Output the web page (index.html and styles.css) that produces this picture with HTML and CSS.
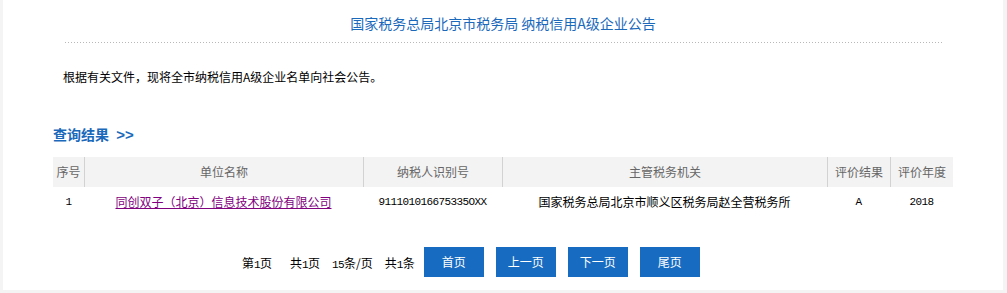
FILE: index.html
```html
<!DOCTYPE html>
<html lang="zh-CN">
<head>
<meta charset="utf-8">
<title>纳税信用A级企业公告</title>
<link rel="stylesheet" href="styles.css">
</head>
<body>
<div class="page">
  <h1 class="title">国家税务总局北京市税务局 纳税信用A级企业公告</h1>
  <div class="divider"></div>
  <p class="notice">根据有关文件，现将全市纳税信用A级企业名单向社会公告。</p>
  <h2 class="section-title">查询结果 <span class="arrows">&gt;&gt;</span></h2>
  <div class="table">
    <div class="th">序号</div>
    <div class="th">单位名称</div>
    <div class="th">纳税人识别号</div>
    <div class="th">主管税务机关</div>
    <div class="th">评价结果</div>
    <div class="th">评价年度</div>
    <div class="td num">1</div>
    <div class="td"><a class="company" href="#">同创双子（北京）信息技术股份有限公司</a></div>
    <div class="td num">911101016675335OXX</div>
    <div class="td">国家税务总局北京市顺义区税务局赵全营税务所</div>
    <div class="td num">A</div>
    <div class="td num">2018</div>
  </div>
  <div class="pager">
    <span class="info first">第<b>1</b>页</span>
    <span class="info">共<b>1</b>页</span>
    <span class="info"><b>15</b>条/页</span>
    <span class="info last">共<b>1</b>条</span>
    <a class="btn" href="#">首页</a>
    <a class="btn" href="#">上一页</a>
    <a class="btn" href="#">下一页</a>
    <a class="btn" href="#">尾页</a>
  </div>
</div>
</body>
</html>
```
FILE: styles.css
```css
html, body {
  margin: 0;
  padding: 0;
  background: #f4f4f4;
}
body {
  font-family: "Noto Sans CJK SC", "Liberation Sans", sans-serif;
  font-size: 12px;
  color: #000;
}
.page {
  margin-left: 3px;
  width: 1000px;
  height: 290px;
  background: #fff;
  overflow: hidden;
}
.title {
  margin: 0;
  padding-top: 13px;
  font-size: 14px;
  font-weight: normal;
  line-height: 20px;
  color: #1a69bb;
  text-align: center;
}
.divider {
  margin: 9px 0 0 62px;
  width: 877px;
  height: 1px;
  background: repeating-linear-gradient(to right, #b8b8b8 0 1px, transparent 1px 3px);
}
.notice {
  margin: 25px 0 0 60px;
  line-height: 18px;
  font-size: 12px;
}
.section-title {
  margin: 38px 0 0 50px;
  font-size: 14px;
  line-height: 20px;
  font-weight: bold;
  color: #1a69bb;
}
.arrows {
  font-family: "Liberation Sans", sans-serif;
  font-size: 15px;
  margin-left: 4px;
  letter-spacing: 0;
}
.table {
  margin: 12px 0 0 50px;
  width: 900px;
  display: grid;
  grid-template-columns: 31px 279px 139px 325px 63px 63px;
}
.th {
  height: 30px;
  line-height: 30px;
  background: #f3f3f3;
  color: #666;
  text-align: center;
  box-sizing: border-box;
  border-left: 1px solid #d2d2d2;
  white-space: nowrap;
}
.th:first-child {
  border-left: none;
}
.td {
  height: 30px;
  line-height: 30px;
  text-align: center;
  white-space: nowrap;
}
.num {
  font-family: "Liberation Mono", monospace;
  font-size: 11px;
  letter-spacing: -0.6px;
}
.company {
  color: #800080;
  text-decoration: underline;
}
.pager {
  margin: 30px 0 0 239px;
  display: flex;
  align-items: center;
  height: 30px;
}
.info {
  margin-right: 12px;
  white-space: nowrap;
}
.info.first {
  margin-right: 18px;
}
.info.last {
  margin-right: 9px;
}
.info b {
  font-weight: normal;
  font-family: "Liberation Mono", monospace;
  font-size: 11px;
  letter-spacing: -0.6px;
}
.btn {
  display: block;
  width: 60px;
  height: 30px;
  line-height: 30px;
  margin-right: 12px;
  background: #176bc1;
  color: #fff;
  text-align: center;
  text-decoration: none;
}
```
